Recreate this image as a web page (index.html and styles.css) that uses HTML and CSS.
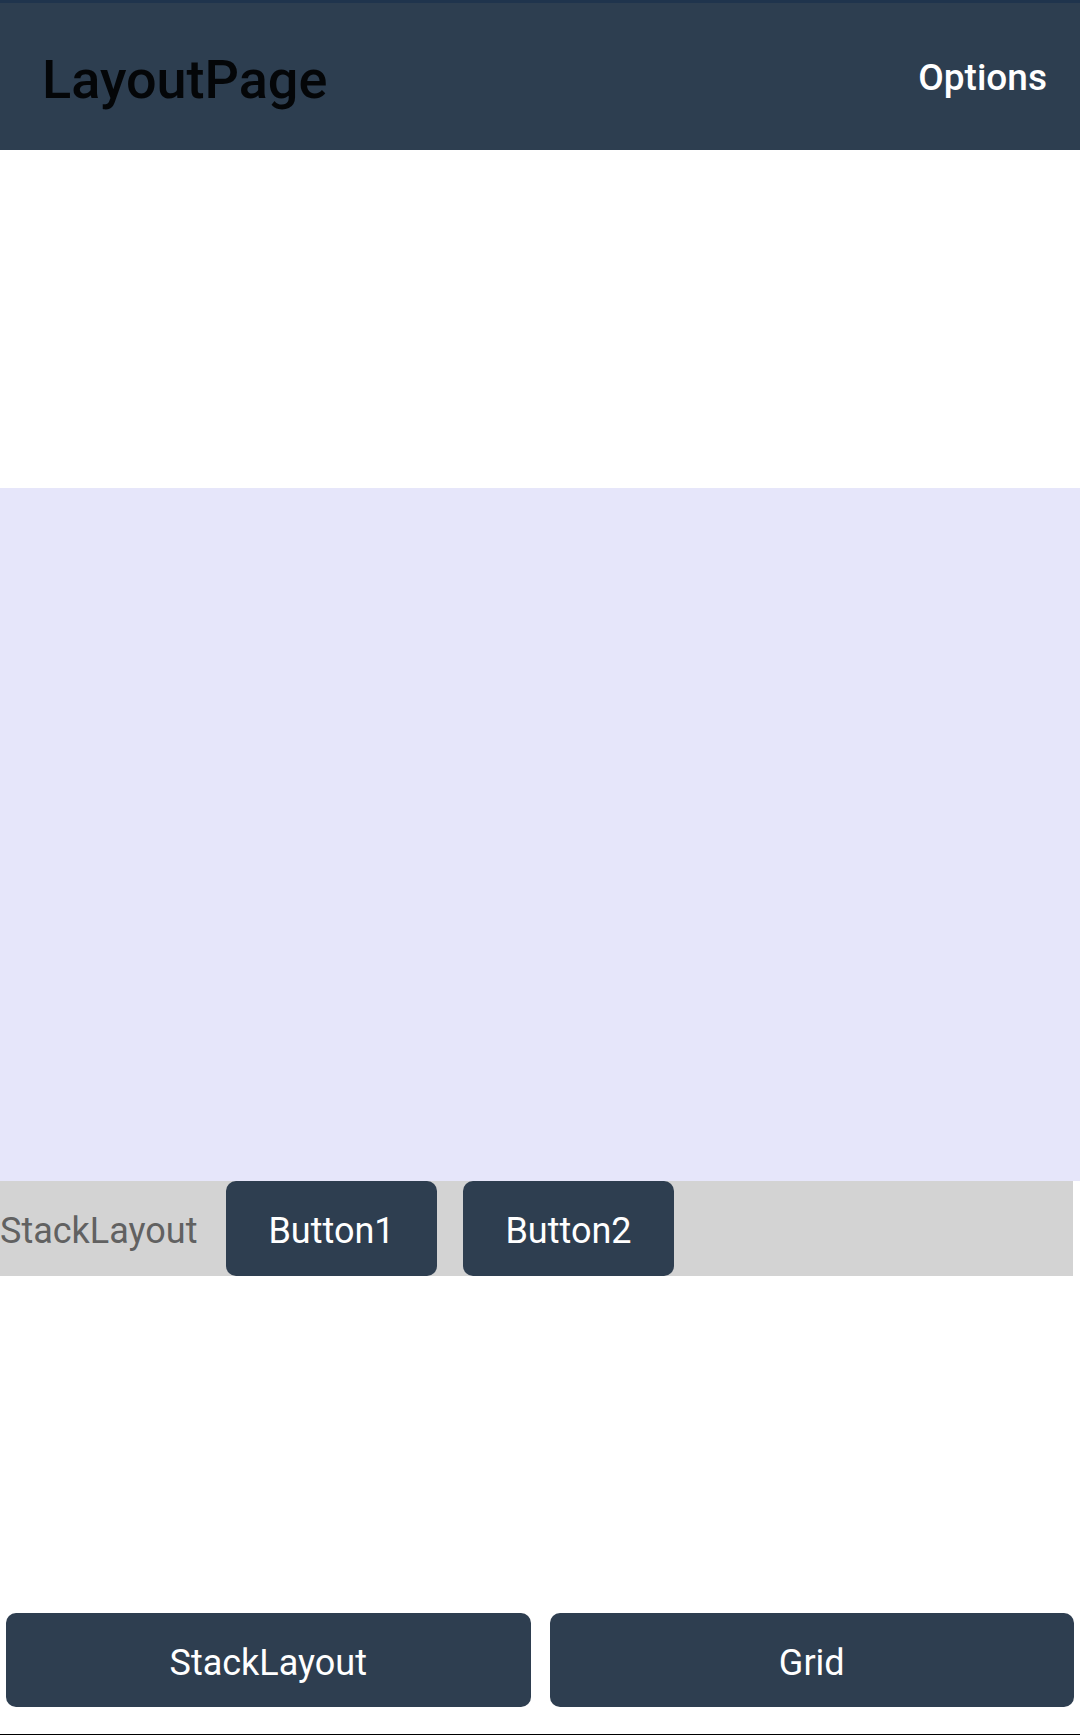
FILE: index.html
```html
<!DOCTYPE html>
<html>
<head>
<meta charset="utf-8">
<title>LayoutPage</title>
<link rel="stylesheet" href="styles.css">
</head>
<body>
<div class="screen">
  <header class="appbar">
    <h1 class="title">LayoutPage</h1>
    <span class="options">Options</span>
  </header>
  <div class="spacer-top"></div>
  <div class="lavender"></div>
  <div class="stack">
    <span class="stack-label">StackLayout</span>
    <button class="btn stack-btn">Button1</button>
    <button class="btn stack-btn">Button2</button>
  </div>
  <div class="spacer-mid"></div>
  <div class="bottom-bar">
    <button class="btn big-btn">StackLayout</button>
    <button class="btn big-btn">Grid</button>
  </div>
  <div class="spacer-bottom"></div>
  <div class="bottom-line"></div>
</div>
</body>
</html>
```

FILE: styles.css
```css
* { box-sizing: border-box; }
html, body {
  margin: 0;
  padding: 0;
  background: #ffffff;
}
body {
  font-family: Roboto, "Noto Sans", "Liberation Sans", sans-serif;
}
.screen {
  width: 1080px;
  height: 1735px;
  display: flex;
  flex-direction: column;
  overflow: hidden;
}
.appbar {
  flex: 0 0 150px;
  background: #2d3e50;
  border-top: 3px solid #1f344d;
  display: flex;
  align-items: center;
  justify-content: space-between;
  padding: 0 33px 0 42px;
}
.title {
  margin: 0;
  font-size: 54px;
  font-weight: 500;
  color: rgba(0, 0, 0, 0.9);
  line-height: 1;
  padding-top: 6px;
}
.options {
  font-size: 37px;
  font-weight: 500;
  color: #ffffff;
  line-height: 1;
  padding-top: 2px;
}
.spacer-top { flex: 0 0 338px; }
.lavender {
  flex: 0 0 693px;
  background: #e6e6fa;
}
.stack {
  flex: 0 0 95px;
  width: 1073px;
  background: #d3d3d3;
  display: flex;
  align-items: stretch;
}
.stack-label {
  flex: 0 0 200px;
  align-self: center;
  font-size: 36px;
  color: #616161;
  line-height: 1;
  padding-top: 4px;
}
.btn {
  font-family: Roboto, "Noto Sans", "Liberation Sans", sans-serif;
  background: #2e3e50;
  color: #ffffff;
  border: none;
  border-radius: 10px;
  font-size: 36px;
  font-weight: 400;
  padding: 5px 0 0 0;
  margin: 0;
  line-height: 1;
}
.stack-btn {
  width: 211px;
}
.stack-btn:first-of-type { margin-left: 26px; }
.stack-btn + .stack-btn { margin-left: 26px; }
.spacer-mid { flex: 0 0 337px; }
.bottom-bar {
  flex: 0 0 94px;
  display: grid;
  grid-template-columns: 1fr 1fr;
  column-gap: 19px;
  padding: 0 6px;
}
.big-btn {
  height: 94px;
}
.spacer-bottom { flex: 0 0 27px; }
.bottom-line {
  flex: 0 0 1px;
  background: #000000;
}
```
